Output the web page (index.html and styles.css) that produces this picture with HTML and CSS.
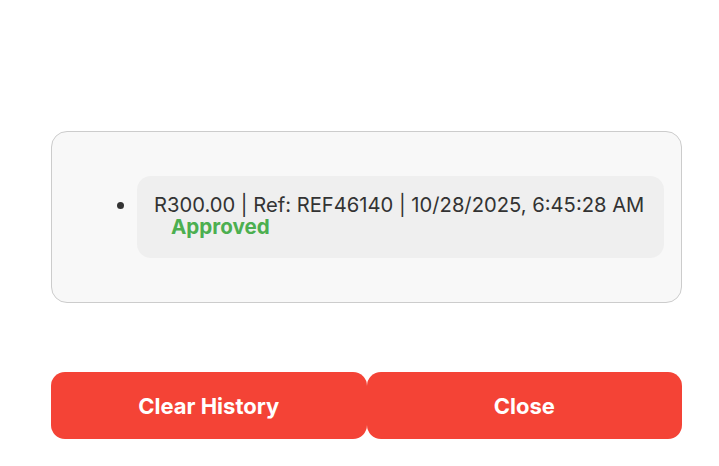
FILE: index.html
```html
<!DOCTYPE html>
<html>
<head>
<meta charset="utf-8">
<link rel="stylesheet" href="styles.css">
</head>
<body>
<div class="modal">
  <div class="history">
    <ul class="history-list">
      <li class="history-item">R300.00 | Ref: REF46140 | 10/28/2025, 6:45:28 AM<span class="status">Approved</span></li>
    </ul>
  </div>
  <div class="actions">
    <button class="btn">Clear History</button>
    <button class="btn">Close</button>
  </div>
</div>
</body>
</html>
```
FILE: styles.css
```css
html, body {
  margin: 0;
  padding: 0;
  background: #ffffff;
}
.modal {
  padding: 131px 37px 0 51px;
  font-family: Inter, "Liberation Sans", sans-serif;
}
.history {
  background: #f8f8f8;
  border: 1px solid #cccccc;
  border-radius: 16px;
  padding: 28px 17px 28px 45px;
}
.history-list {
  margin: 16px 0;
  padding-left: 40px;
  color: #333333;
}
.history-item {
  background: #efefef;
  border-radius: 14px;
  padding: 18px 17px 20px 17px;
  font-size: 20.2px;
  line-height: 22px;
}
.status {
  display: block;
  margin-left: 17px;
  color: #4caf50;
  font-weight: 700;
  font-size: 20.6px;
}
.actions {
  display: flex;
  margin-top: 69px;
}
.btn {
  flex: 1;
  height: 67px;
  border: none;
  border-radius: 14px;
  background: #f44336;
  color: #ffffff;
  font-family: Inter, sans-serif;
  font-weight: 700;
  font-size: 22px;
}
```
